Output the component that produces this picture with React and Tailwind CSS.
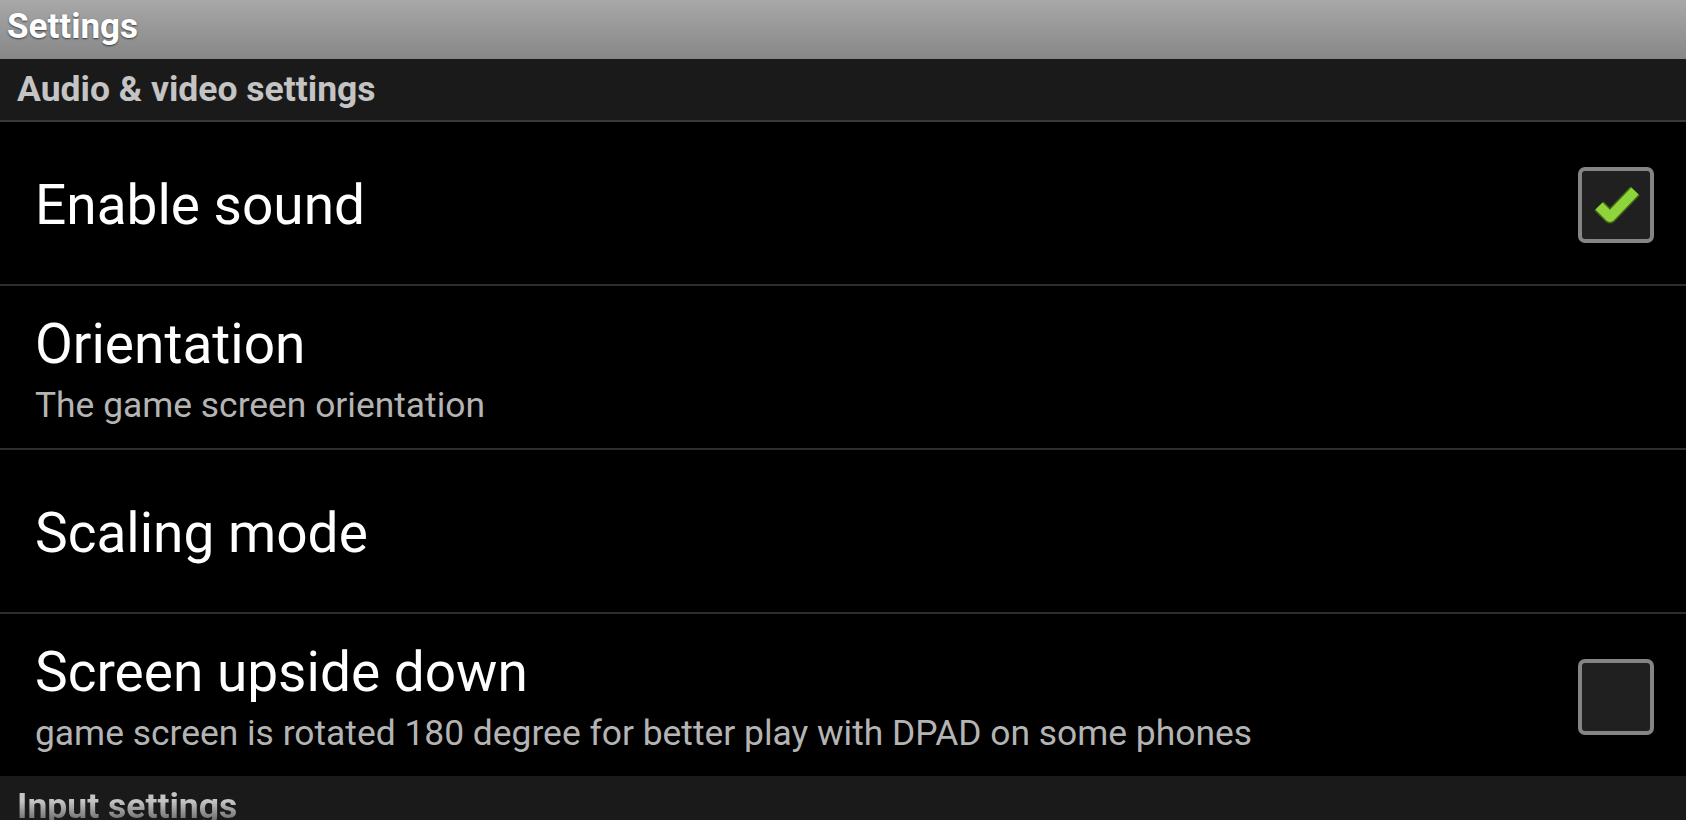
import React from "react";

const font = { fontFamily: "Roboto, 'Noto Sans', sans-serif" };

function CheckBox({ checked }) {
  return (
    <div className="w-[76px] h-[76px] shrink-0 rounded-[7px] border-[4px] border-[#858585] bg-[#202020] flex items-center justify-center">
      {checked && (
        <svg width="68" height="68" viewBox="0 0 68 68">
          <polyline
            points="17,35 28,46 53,20"
            fill="none"
            stroke="#3f6a12"
            strokeWidth="13"
            strokeLinejoin="round"
          />
          <polyline
            points="17,35 28,46 53,20"
            fill="none"
            stroke="#8ed43a"
            strokeWidth="10"
            strokeLinejoin="round"
          />
        </svg>
      )}
    </div>
  );
}

function Row({ title, summary, checkbox, checked }) {
  return (
    <div className="h-[162px] flex items-center pl-[35px] pr-[32px] pt-[4px]">
      <div className="flex-1 flex flex-col">
        <div className="text-[55px] leading-[62px] text-white">{title}</div>
        {summary && (
          <div className="text-[35.4px] leading-[40px] text-[#b4b4b4] mt-[10px]">{summary}</div>
        )}
      </div>
      {checkbox && <CheckBox checked={checked} />}
    </div>
  );
}

const Divider = () => <div className="h-[2px] bg-[#2e2e2e]" />;

export default function App() {
  return (
    <div style={font} className="w-[1686px] h-[820px] overflow-hidden bg-black">
      <div className="h-[59px] bg-gradient-to-b from-[#a8a8a8] to-[#878787] flex items-center pl-[7px] pb-[4px]">
        <span className="text-[35px] font-bold text-white [text-shadow:0_1px_2px_rgba(0,0,0,0.6)]">
          Settings
        </span>
      </div>
      <div className="h-[61px] bg-[#1a1a1a] flex items-center pl-[17px]">
        <span className="text-[35.5px] font-bold text-[#c4c4c4]">Audio &amp; video settings</span>
      </div>
      <div className="h-[2px] bg-[#3a3a3a]" />
      <Row title="Enable sound" checkbox checked />
      <Divider />
      <Row title="Orientation" summary="The game screen orientation" />
      <Divider />
      <Row title="Scaling mode" />
      <Divider />
      <Row
        title="Screen upside down"
        summary="game screen is rotated 180 degree for better play with DPAD on some phones"
        checkbox
      />
      <div className="h-[61px] bg-[#1a1a1a] flex items-center pl-[17px]">
        <span className="text-[35.5px] font-bold bg-gradient-to-b from-[#c4c4c4] from-40% to-[#3a3a3a] bg-clip-text text-transparent">
          Input settings
        </span>
      </div>
    </div>
  );
}
